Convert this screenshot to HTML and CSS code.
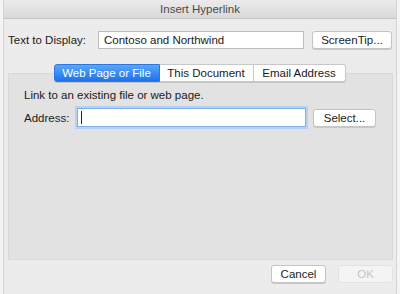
FILE: index.html
```html
<!DOCTYPE html>
<html lang="en">
<head>
    <meta charset="UTF-8">
    <title>Insert Hyperlink</title>
    <link rel="stylesheet" href="styles.css">
</head>
<body>
    <div class="window">
        <div class="titlebar">Insert Hyperlink</div>
        <div class="row top-row">
            <label class="label display-label">Text to Display:</label>
            <div class="field display-field">Contoso and Northwind</div>
            <button class="btn tip-btn">ScreenTip...</button>
        </div>
        <div class="tabbox">
            <div class="tabs">
                <div class="tab active">Web Page or File</div>
                <div class="tab">This Document</div>
                <div class="tab">Email Address</div>
            </div>
            <div class="panel">
                <p class="hint">Link to an existing file or web page.</p>
                <div class="row addr-row">
                    <label class="label addr-label">Address:</label>
                    <div class="field addr-field"><span class="caret"></span></div>
                    <button class="btn select-btn">Select...</button>
                </div>
            </div>
        </div>
        <div class="footer">
            <button class="btn cancel-btn">Cancel</button>
            <button class="btn ok-btn" disabled>OK</button>
        </div>
    </div>
</body>
</html>
```

FILE: styles.css
```css
html, body { margin: 0; padding: 0; }
body { width: 400px; height: 294px; overflow: hidden; background: #f4f4f4; font-family: "Liberation Sans", Arial, sans-serif; font-size: 11.5px; color: #1a1a1a; }
.window { margin: 0 3px; height: 294px; background: #ececec; border-left: 1px solid #d4d4d4; border-right: 1px solid #d4d4d4; box-sizing: border-box; display: flex; flex-direction: column; }
.titlebar { height: 18px; line-height: 18px; text-align: center; font-size: 11.5px; color: #4a4a4a; background: linear-gradient(#ebebeb, #d9d9d9); border-bottom: 1px solid #c4c4c4; }
.row { display: flex; align-items: center; }
.top-row { padding: 12px 4px 0 4px; height: 18px; }
.label { font-size: 11.5px; white-space: nowrap; }
.display-label { width: 90px; }
.field { height: 18px; box-sizing: border-box; background: #fff; border: 1px solid #bcbcbc; padding: 0 5px; line-height: 16px; font-size: 11.5px; }
.display-field { width: 206px; }
.btn { font-family: inherit; font-size: 11.5px; color: #222; background: #fff; border: 1px solid #c4c4c4; border-radius: 3px; height: 18px; padding: 0; box-shadow: 0 1px 0 #c8c8c8; }
.tip-btn { margin-left: 8px; width: 80px; }
.tabbox { margin: 15px 3px 0 4px; position: relative; }
.tabs { position: absolute; top: 0; left: 0; right: 0; display: flex; justify-content: center; padding-right: 2px; }
.tab { height: 16px; line-height: 16px; background: #fff; border: 1px solid #c8c8c8; border-left: none; font-size: 11.5px; white-space: nowrap; text-align: center; box-shadow: 0 1px 0 #c4c4c4; }
.tab:nth-child(1) { width: 104px; border-left: 1px solid #c8c8c8; border-radius: 3px 0 0 3px; }
.tab:nth-child(2) { width: 93px; }
.tab:nth-child(3) { width: 91px; border-radius: 0 3px 3px 0; }
.tab.active { background: linear-gradient(#5aa6f8, #1c73ea); color: #fff; border-color: #2a78e0; }
.panel { margin-top: 9px; height: 187px; background: #e2e2e2; border: 1px solid #d8d8d8; box-sizing: border-box; padding: 15px 0 0 15px; }
.hint { margin: 0; font-size: 11.5px; line-height: 13px; }
.addr-row { margin-top: 6px; }
.addr-label { width: 53px; }
.addr-field { width: 229px; height: 19px; border: 1px solid #7fb0ea; box-shadow: 0 0 0 2px #b4d2f4; display: flex; align-items: center; padding-left: 3px; }
.caret { width: 1px; height: 13px; background: #222; }
.select-btn { margin-left: 7px; width: 63px; }
.footer { display: flex; justify-content: flex-end; padding: 5px 3px 0 0; }
.cancel-btn { width: 55px; }
.ok-btn { width: 55px; margin-left: 12px; color: #c4c4c4; border-color: #e2e2e2; box-shadow: none; background: #f4f4f4; }
```
